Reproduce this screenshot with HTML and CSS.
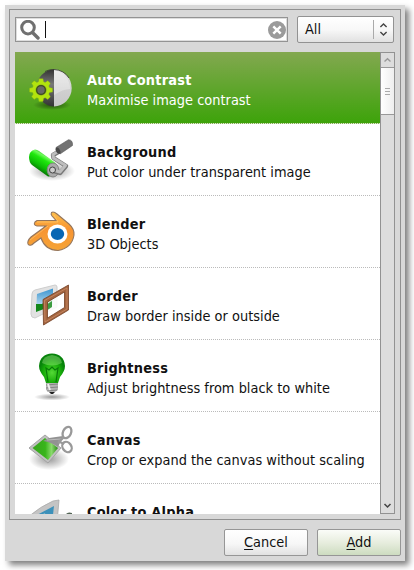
FILE: index.html
```html
<!DOCTYPE html>
<html lang="en">
<head>
<meta charset="utf-8">
<title>Add Action</title>
<link rel="stylesheet" href="styles.css">
</head>
<body>
<main class="window">
  <section class="frame">
    <div class="toolbar">
      <div class="search">
        <svg class="lens" width="20" height="20" viewBox="0 0 20 20"><circle cx="8" cy="7.600" r="6.300" fill="none" stroke="#707070" stroke-width="3"/><path d="M12.500 12.500L18 18" stroke="#707070" stroke-width="3.400" stroke-linecap="round"/></svg>
        <span class="caret"></span>
        <svg class="clear" width="18" height="18" viewBox="0 0 18 18"><circle cx="9" cy="9" r="9" fill="#9b9b9b"/><path d="M5.300 5.300l7.400 7.400M12.700 5.300l-7.400 7.400" stroke="#fff" stroke-width="2.400"/></svg>
      </div>
      <div class="combo"><span class="combo-text">All</span>
        <svg class="combo-arrows" width="20" height="25" viewBox="0 0 20 25"><path d="M.5 3v19" stroke="#aaa"/><path d="M7.400 10l3.100-3 3.100 3M7.400 15l3.100 3 3.100-3" fill="none" stroke="#444" stroke-width="1.400"/></svg>
      </div>
    </div>
    <div class="list-area">
      <ul class="list">
        <li class="row selected">
          <svg class="icon" viewBox="0 0 75 71">
            <defs>
              <linearGradient id="dark" x2="0" y2="1"><stop stop-color="#333"/><stop offset=".4" stop-color="#777"/><stop offset="1" stop-color="#333"/></linearGradient>
              <linearGradient id="light" x2="0" y2="1"><stop stop-color="#e4e4e4"/><stop offset=".55" stop-color="#d0d0d0"/><stop offset="1" stop-color="#c8c8c8"/></linearGradient>
              <radialGradient id="shade"><stop stop-color="#000" stop-opacity=".5"/><stop offset="1" stop-color="#000" stop-opacity="0"/></radialGradient>
            </defs>
            <ellipse cx="37" cy="53" rx="19" ry="5" fill="url(#shade)"/>
            <path d="M39 17.500A17.500 18.500 0 0 0 39 54.500z" fill="url(#dark)"/><path d="M39 17.500A17.700 18.500 0 0 1 39 54.500z" fill="url(#light)"/>
            <path d="M39 18.500A17 17.800 0 0 1 55 37Q48 37 39 43z" fill="#fff" opacity=".3"/>
            <path d="M30 19.500Q34 17.500 39 17.500Q49 18 54 26" fill="none" stroke="#333" stroke-width=".8"/>
            <path fill="#b2e30e" stroke="#86b212" stroke-width=".4" fill-rule="evenodd" d="M24 26.700h4l.6 3 1.500.7 2.700-1.700 2.600 2.600-1.600 2.700.7 1.600 3 .6v3.700l-3 .6-.7 1.600 1.600 2.700-2.600 2.600-2.700-1.700-1.500.7-.6 3h-4l-.6-3-1.500-.7-2.700 1.700-2.600-2.600 1.600-2.700-.7-1.600-3-.6v-3.700l3-.6.7-1.600-1.600-2.700 2.600-2.600 2.700 1.700 1.500-.7zM26 32.700a5.300 5.300 0 1 0 .1 0z"/>
            <circle cx="26" cy="38" r="5" fill="#405018"/><circle cx="26" cy="38" r="3.700" fill="#686868"/>
          </svg>
          <div class="copy"><b>Auto Contrast</b><span>Maximise image contrast</span></div>
        </li>
        <li class="row">
          <svg class="icon" viewBox="0 0 75 71">
            <defs>
              <linearGradient id="roll" gradientUnits="userSpaceOnUse" x1="21" y1="45" x2="31" y2="28"><stop stop-color="#087b05"/><stop offset=".25" stop-color="#0cbd04"/><stop offset=".6" stop-color="#20e80e"/><stop offset=".78" stop-color="#70fa5c"/><stop offset="1" stop-color="#069a03"/></linearGradient>
              <radialGradient id="soft"><stop stop-color="#000" stop-opacity=".4"/><stop offset="1" stop-color="#000" stop-opacity="0"/></radialGradient>
            </defs>
            <ellipse cx="37" cy="47" rx="23" ry="10" fill="url(#soft)"/>
            <path d="M20 25.500Q14 27 14 33Q14 38 17 41L33 52.500Q41 53 42 44Q42 39 38 37L24 27Q22 25.500 20 25.500z" fill="url(#roll)"/>
            <ellipse cx="38" cy="46" rx="5.800" ry="7" fill="#aaa" stroke="#858585"/>
            <path d="M38 47L45 49 51 42 38.500 34 38 31 45 27" fill="none" stroke="#777" stroke-width="4.400" stroke-linejoin="round"/>
            <path d="M38 46L45 48 50.500 41.500 38.500 34 38 30.500 45 26.500" fill="none" stroke="#bdbdbd" stroke-width="3" stroke-linejoin="round"/>
            <path d="M41 23.500L53.500 15.700Q58 16 57.500 21.500L45 30Q42 28 41 23.500z" fill="#737373" stroke="#555" stroke-width=".6"/><ellipse cx="43" cy="26.700" rx="2" ry="3.300" transform="rotate(-30 43 26.700)" fill="#484848"/><circle cx="37.500" cy="46" r="3" fill="#ccc" stroke="#444"/>
          </svg>
          <div class="copy"><b>Background</b><span>Put color under transparent image</span></div>
        </li>
        <li class="row">
          <svg class="icon" viewBox="0 0 75 71">
            <defs><linearGradient id="orange" x2="0" y2="1"><stop stop-color="#ffc04b"/><stop offset=".45" stop-color="#f79432"/><stop offset="1" stop-color="#f5a437"/></linearGradient></defs>
            <path d="M36.500 16.500Q38.500 15 42 18L54 28Q59.500 33 59 39Q57 52 43 54.500Q30 54 26 42L19 47Q15 51 13 48Q12 45 16 41L31 30H22Q18 29 20 26L22 24.500H41L37 20Q35.500 18 36.500 16.500z" fill="url(#orange)" stroke="#94765d" stroke-width="1.100"/>
            <path d="M22 26H43L39 19M15 44L33 30" fill="none" stroke="#ffd47d" opacity=".5"/>
            <ellipse cx="42.500" cy="38" rx="10" ry="9.500" fill="#fff"/><ellipse cx="42.500" cy="38" rx="6.700" ry="6" fill="#0866b3"/>
          </svg>
          <div class="copy"><b>Blender</b><span>3D Objects</span></div>
        </li>
        <li class="row">
          <svg class="icon" viewBox="0 0 75 71">
            <defs><linearGradient id="sky" x2="0" y2="1"><stop stop-color="#3993ce"/><stop offset="1" stop-color="#e5f5fa"/></linearGradient></defs>
            <path d="M20 22L40 17Q42 17 42 19V39L20 50Q16 50 16 46L17 26Q17 23 20 22z" fill="#e2e2e2" stroke="#cecece"/>
            <path d="M22 26L38 20.500V36L21 44z" fill="url(#sky)"/><path d="M21 36L27 36 32 32 37 31V38L21 44z" fill="#138719"/>
            <path d="M32.500 34V50L49.500 39.500V24z" fill="#fff" opacity=".85"/><path d="M32.500 36L37 33V39L32.500 42z" fill="#138719" opacity=".8"/>
            <path fill-rule="evenodd" d="M28 31.500L53.500 17V42L28.500 57zM32.500 34V50L49.500 39.500V24z" fill="#a4653f" stroke="#734025" stroke-width=".8"/>
            <path d="M29.500 32.500L52 20V41L30 54z" fill="none" stroke="#c98b68" stroke-width=".8"/>
          </svg>
          <div class="copy"><b>Border</b><span>Draw border inside or outside</span></div>
        </li>
        <li class="row">
          <svg class="icon" viewBox="0 0 75 71">
            <defs><radialGradient id="bulb" cx=".5" cy=".65"><stop stop-color="#54d936"/><stop offset=".65" stop-color="#18ae09"/><stop offset="1" stop-color="#07830b"/></radialGradient></defs>
            <ellipse cx="37" cy="57" rx="18" ry="3.500" fill="url(#soft)"/>
            <path d="M24 26Q25 14 37 13.500Q49 14 50 26Q50 31 45 37L43 43H31L29 37Q24 31 24 26z" fill="url(#bulb)"/>
            <path d="M27 23Q28 16 37 15Q46 16 47 23Q37 28 27 23z" fill="#a7f08b" opacity=".4"/><path d="M33 42L31 28 34 30 37 27 40 30 43 28 41 42" fill="none" stroke="#087b08" stroke-width="1.200"/>
            <path d="M31 43H43V50L40 52H34L31 50z" fill="#b4b4b4"/><path d="M31 45l12-1M31 48l12-1M32 51l10-1" stroke="#777" stroke-width=".8"/><path d="M33 44l2 6" stroke="#eee" stroke-width="2"/><path d="M34 52h6l-2 2h-2z" fill="#222"/>
          </svg>
          <div class="copy"><b>Brightness</b><span>Adjust brightness from black to white</span></div>
        </li>
        <li class="row">
          <svg class="icon" viewBox="0 0 75 71">
            <defs><linearGradient id="cloth"><stop stop-color="#38a41d"/><stop offset=".5" stop-color="#38b51b"/><stop offset=".75" stop-color="#8bda6d"/><stop offset="1" stop-color="#258713"/></linearGradient></defs>
            <ellipse cx="34" cy="47" rx="20" ry="11" fill="url(#soft)"/>
            <path d="M14 36L30 23 46 36 33 51z" fill="#c0c0c0" stroke="#a4a4a4"/><path d="M17.500 36L30 26 43 36 33 48z" fill="url(#cloth)"/>
            <path d="M28 29L34 26 48 24 43 35Q36 30 28 29z" fill="#929292"/><path d="M32 28L46 27" stroke="#bbb"/>
            <g fill="none" stroke="#999" stroke-width="2.300"><ellipse cx="52" cy="20.500" rx="4" ry="6" transform="rotate(25 52 20.500)"/><ellipse cx="52" cy="35" rx="4.300" ry="5.500" transform="rotate(-35 52 35)"/><path d="M43 31l6-6M43 29l6 3"/></g>
          </svg>
          <div class="copy"><b>Canvas</b><span>Crop or expand the canvas without scaling</span></div>
        </li>
        <li class="row">
          <svg class="icon" viewBox="0 0 75 71">
            <path d="M13 33Q26 22 38 17L44 16 42 39z" fill="#c4c4c4" stroke="#aaa" stroke-width=".8"/><path d="M18 33L39 22 37 39z" fill="#3d91ba"/><path d="M24 32l6-3 1 5z" fill="#88bdcc"/><path d="M51 30Q53 27.500 57 29V35H51z" fill="#526454"/>
          </svg>
          <div class="copy"><b>Color to Alpha</b></div>
        </li>
      </ul>
      <div class="scrollbar">
        <svg class="step" viewBox="0 0 13 14"><path d="M3.500 8.500L6.500 5.700 9.500 8.500" fill="none" stroke="#999" stroke-width="1.400"/></svg>
        <div class="thumb"><i></i><i></i><i></i></div>
        <div class="track"></div>
        <svg class="step" viewBox="0 0 13 14"><path d="M3.500 5L6.500 8 9.500 5" fill="none" stroke="#444" stroke-width="1.500"/></svg>
      </div>
    </div>
  </section>
  <footer class="actions"><button class="button"><u>C</u>ancel</button><button class="button add"><u>A</u>dd</button></footer>
</main>
</body>
</html>
```
FILE: styles.css
```css
* { box-sizing: border-box; }
body { margin: 0; padding: 5px; height: 570px; overflow: hidden; background: #fff; color: #111; font: 14.4px/20px "DejaVu Sans Condensed", "DejaVu Sans", sans-serif; }
.window { width: 400px; height: 556px; padding: 4px; background: #d8d8d8; box-shadow: 4px 4px 6px rgba(0, 0, 0, .5); }
.frame { width: 392px; height: 511px; padding: 6px 5px 5px; border: 1px solid #909090; }
.toolbar { display: flex; justify-content: space-between; height: 28px; width: 379px; }
.search { display: flex; align-items: center; width: 273px; height: 25px; margin-top: 1px; padding: 0 1px 0 3px; border: 1px solid #939393; background: #fff; box-shadow: inset 0 0 0 1px #ddd; }
.lens { margin-left: 1px; }
.caret { width: 1px; height: 17px; margin-left: 5px; background: #111; }
.clear { margin-left: auto; }
.combo { display: flex; align-items: center; width: 97px; height: 27px; padding-left: 7px; border: 1px solid #929292; border-radius: 2px; background: linear-gradient(#fff, #f8f8f8 50%, #e1e1e1); }
.combo-text { margin-top: -2px; }
.combo-arrows { margin-left: auto; }
.list-area { display: flex; height: 462px; margin-top: 8px; }
.list { width: 365px; margin: 0; padding: 0; overflow: hidden; background: #fff; list-style: none; }
.row { display: flex; height: 72px; border-bottom: 1px dotted #bbb; }
.row b { letter-spacing: .23px; }
.row span { letter-spacing: .02px; }
.selected { color: #fff; background: linear-gradient(#83a850, #3da30a); background-clip: border-box; border-bottom-color: #d8efcc; }
.icon { flex: none; width: 75px; height: 71px; margin-right: -3px; }
.copy { display: flex; flex-direction: column; padding-top: 18px; white-space: nowrap; }
.scrollbar { display: flex; flex-direction: column; width: 15px; border: 1px solid #929292; background: #ddd; }
.step { flex: none; width: 13px; height: 14px; }
.thumb { display: flex; flex: none; flex-direction: column; align-items: center; justify-content: center; gap: 2px; height: 48px; border: solid #999; border-width: 1px 0; background: linear-gradient(90deg, #fff, #eee); }
.thumb i { width: 5px; height: 1px; background: #aaa; }
.track { flex: 1; }
.actions { display: flex; justify-content: flex-end; gap: 9px; padding-top: 9px; }
.button { width: 84px; height: 27px; padding: 0 0 2px; border: 1px solid #969696; border-radius: 2px; background: linear-gradient(#fff, #f7f7f7 55%, #e1e1e1); color: #111; font: inherit; }
.add { background: linear-gradient(#fafcf8, #e7edde 50%, #cddcc0); }
u { text-decoration-thickness: 1px; text-underline-offset: 2px; }
```
